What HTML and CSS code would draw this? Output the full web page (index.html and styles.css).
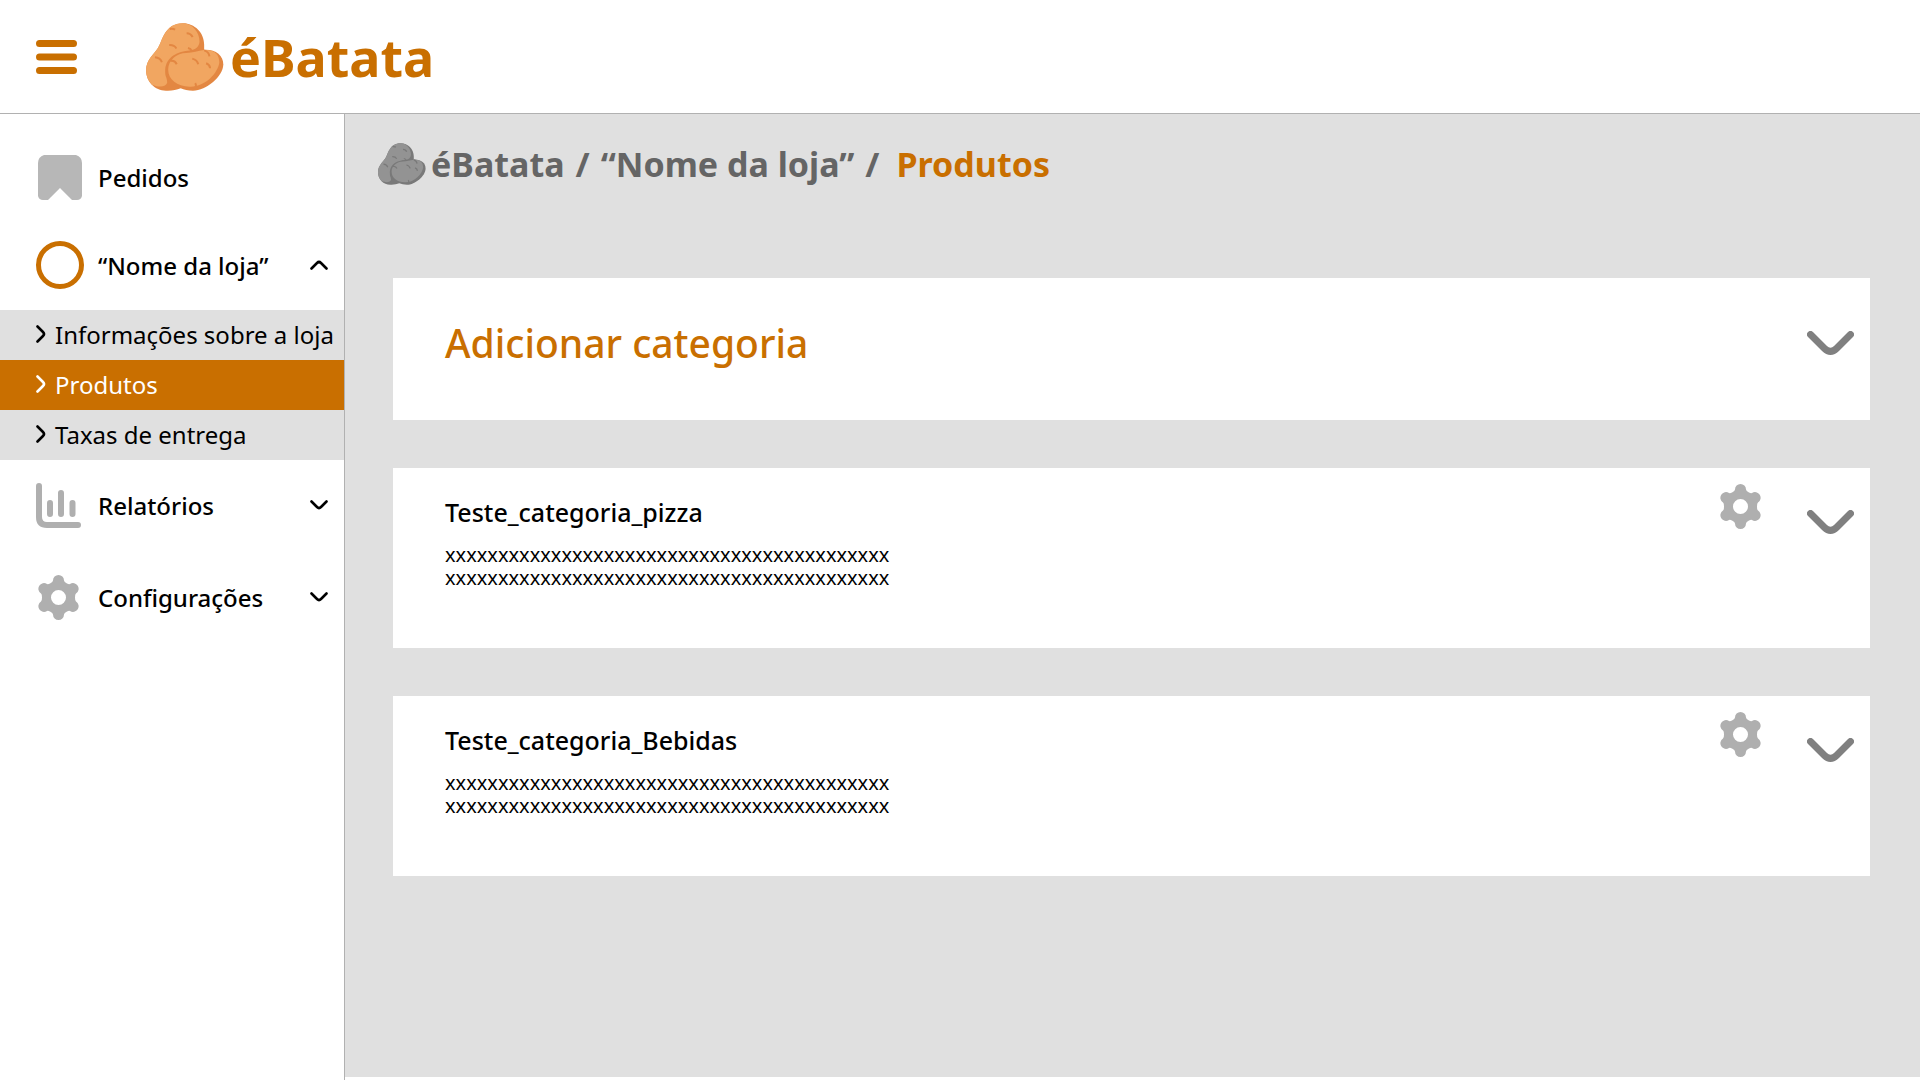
FILE: index.html
```html
<!DOCTYPE html>
<html lang="pt-BR">
<head>
<meta charset="utf-8">
<meta name="viewport" content="width=device-width, initial-scale=1">
<title>éBatata - Produtos</title>
<link rel="stylesheet" href="styles.css">
</head>
<body>
<svg class="sprite" aria-hidden="true">
  <symbol id="potato" viewBox="48 38 236 206">
    <path class="potato-shade" d="M160 39C195 39 224 68 224 103L224 125L153 236C140 241 125 244 108 243C75 243 48 215 48 181C48 150 72 132 85 112C98 92 104 39 160 39Z"/>
    <path class="potato-skin" d="M160 39C190 40 210 67 210 95C209 110 198 119 180 121C145 123 108 140 106 180C105 198 113 208 112 219C109 231 90 235 66 225C54 213 48 198 48 181C48 150 72 132 85 112C98 92 104 39 160 39Z"/>
    <path class="potato-shade" d="M224 119C258 117 282 136 282 163C282 200 230 243 190 243C175 243 163 240 153 236L108 200C103 160 140 125 190 121Z"/>
    <path class="potato-skin" d="M224 120C255 117 270 133 270 158C266 190 226 233 180 231C142 229 115 210 115 179C115 151 141 129 170 129C190 129 205 122 224 120Z"/>
    <path class="potato-mark" d="M120 56Q129 54 136 58M171 69Q184 69 189 81M118 105Q133 104 140 115M75 142Q91 143 96 157M175 114Q184 116 186 122M224 121Q238 125 240 139M122 153Q135 150 141 163M188 146Q203 150 206 163M230 160Q241 164 242 175M197 220Q201 226 198 233"/>
  </symbol>
  <symbol id="gear" viewBox="0 0 41 45">
    <path fill="currentColor" fill-rule="evenodd" d="M15 5.500a5.500 5.500 0 0 1 11 0Q26 7 29 8.500Q31 9.500 32 9a5.500 5.500 0 1 1 6 9.500Q37 19 37 22.500T38 26.500a5.500 5.500 0 1 1-6 9.500Q31 35.500 29 36.500Q26 38 26 39.500a5.500 5.500 0 0 1-11 0Q15 38 12 36.500Q10 35.500 9 36a5.500 5.500 0 1 1-6-9.500Q4 26 4 22.500T3 18.500a5.500 5.500 0 1 1 6-9.500Q10 9.500 12 8.500Q15 7 15 5.500ZM20.500 15a7.500 7.500 0 1 0 0 15a7.500 7.500 0 0 0 0-15Z"/>
  </symbol>
  <symbol id="chevron" viewBox="0 0 47 24">
    <path d="M3.500 3.500L17.500 17.500Q23.500 23.500 29.500 17.500L43.500 3.500" fill="none" stroke="currentColor" stroke-width="7" stroke-linecap="round"/>
  </symbol>
  <symbol id="chevron-thin" viewBox="0 0 18 10">
    <path d="M1.500 1.500L7 7Q9 9 11 7L16.500 1.500" fill="none" stroke="currentColor" stroke-width="2.600" stroke-linecap="round"/>
  </symbol>
  <symbol id="arrow" viewBox="0 0 10 18">
    <path d="M1.500 1.500L7 7Q9 9 7 11L1.500 16.500" fill="none" stroke="currentColor" stroke-width="2.600" stroke-linecap="round"/>
  </symbol>
</svg>

<header class="topbar">
  <button class="icon-button" type="button" aria-label="Menu">
    <svg class="burger" viewBox="0 0 41 34"><path d="M3.500 3.500H37.500M3.500 17H37.500M3.500 30.500H37.500" stroke="currentColor" stroke-width="7" stroke-linecap="round"/></svg>
  </button>
  <a class="brand" href="#">
    <svg class="brand-icon"><use href="#potato"/></svg>
    <span>éBatata</span>
  </a>
</header>

<div class="layout">
  <nav class="sidebar" aria-label="Principal">
    <a class="menu-row" href="#">
      <span class="menu-icon"><svg width="44" height="45" viewBox="0 0 44 45"><path fill="#b7b7b7" d="M6 0H38Q44 2 44 8V41Q43 45 39 45H34L22 33L10 45H5Q1 45 0 41V8Q0 2 6 0Z"/></svg></span>
      <span class="menu-label">Pedidos</span>
    </a>
    <button class="menu-row" type="button" aria-expanded="true">
      <span class="menu-icon"><span class="store-avatar"></span></span>
      <span class="menu-label">“Nome da loja”</span>
      <svg class="menu-chevron open"><use href="#chevron-thin"/></svg>
    </button>
    <div class="submenu">
      <a href="#"><svg class="submenu-arrow"><use href="#arrow"/></svg>Informações sobre a loja</a>
      <a href="#" class="active" aria-current="page"><svg class="submenu-arrow"><use href="#arrow"/></svg>Produtos</a>
      <a href="#"><svg class="submenu-arrow"><use href="#arrow"/></svg>Taxas de entrega</a>
    </div>
    <button class="menu-row collapsed" type="button" aria-expanded="false">
      <span class="menu-icon"><svg width="48" height="45" viewBox="0 0 48 45"><g fill="none" stroke="#afafaf" stroke-linecap="round"><path stroke-width="6" d="M3 3V34Q3 42 11 42H42"/><path stroke-width="6" d="M14 20V31M25 10V31M36.500 20V31"/></g></svg></span>
      <span class="menu-label">Relatórios</span>
      <svg class="menu-chevron"><use href="#chevron-thin"/></svg>
    </button>
    <button class="menu-row collapsed" type="button" aria-expanded="false">
      <span class="menu-icon"><svg class="gear" width="45" height="45" viewBox="0 0 45 45"><use href="#gear" width="41" height="45"/></svg></span>
      <span class="menu-label">Configurações</span>
      <svg class="menu-chevron"><use href="#chevron-thin"/></svg>
    </button>
  </nav>

  <main class="content">
    <h1 class="breadcrumb">
      <svg class="breadcrumb-icon"><use href="#potato"/></svg>
      <span>éBatata</span>
      <span>/</span>
      <span>“Nome da loja”</span>
      <span>/</span>
      <span class="current">Produtos</span>
    </h1>

    <section class="card add-card">
      <h2 class="add-title">Adicionar categoria</h2>
      <button class="icon-button" type="button" aria-label="Expandir"><svg class="chevron"><use href="#chevron"/></svg></button>
    </section>

    <section class="card category">
      <div class="category-text">
        <h3>Teste_categoria_pizza</h3>
        <p>xxxxxxxxxxxxxxxxxxxxxxxxxxxxxxxxxxxxxxxxxx<br>xxxxxxxxxxxxxxxxxxxxxxxxxxxxxxxxxxxxxxxxxx</p>
      </div>
      <button class="icon-button" type="button" aria-label="Configurar"><svg class="gear"><use href="#gear"/></svg></button>
      <button class="icon-button toggle" type="button" aria-label="Expandir"><svg class="chevron"><use href="#chevron"/></svg></button>
    </section>

    <section class="card category">
      <div class="category-text">
        <h3>Teste_categoria_Bebidas</h3>
        <p>xxxxxxxxxxxxxxxxxxxxxxxxxxxxxxxxxxxxxxxxxx<br>xxxxxxxxxxxxxxxxxxxxxxxxxxxxxxxxxxxxxxxxxx</p>
      </div>
      <button class="icon-button" type="button" aria-label="Configurar"><svg class="gear"><use href="#gear"/></svg></button>
      <button class="icon-button toggle" type="button" aria-label="Expandir"><svg class="chevron"><use href="#chevron"/></svg></button>
    </section>
  </main>
</div>
</body>
</html>
```
FILE: styles.css
```css
:root {
  --orange: #c96f00;
  --gray-bg: #e0e0e0;
  --line: #b1b1b1;
  --potato-skin: #f1a661;
  --potato-shade: #e38742;
}

* { box-sizing: border-box; }

body {
  margin: 0;
  min-height: 100vh;
  display: flex;
  flex-direction: column;
  background: #fff;
  color: #000;
  font-family: "Noto Sans", "Open Sans", sans-serif;
  font-size: 24px;
}

h1, h2, h3, p { margin: 0; }
a { color: inherit; text-decoration: none; }
button { font: inherit; color: inherit; background: none; border: 0; padding: 0; cursor: pointer; }
svg { display: block; flex: none; }

.sprite { position: absolute; width: 0; height: 0; }
.potato-skin { fill: var(--potato-skin); }
.potato-shade { fill: var(--potato-shade); }
.potato-mark { fill: none; stroke: var(--potato-shade); stroke-width: 6; }

.topbar {
  display: flex;
  align-items: center;
  gap: 69px;
  height: 114px;
  padding: 0 36px;
  border-bottom: 1px solid var(--line);
  color: var(--orange);
}
.burger { width: 41px; height: 34px; }
.brand {
  display: flex;
  align-items: center;
  gap: 6px;
  font-size: 52px;
  line-height: 72px;
  font-weight: 700;
}
.brand-icon { width: 78px; height: 68px; }

.layout { flex: 1; display: flex; }

.sidebar {
  flex: none;
  width: 345px;
  padding-top: 20px;
  border-right: 1px solid var(--line);
}
.menu-row {
  display: flex;
  align-items: center;
  gap: 14px;
  width: 100%;
  height: 88px;
  padding: 0 16px 2px 36px;
  font-weight: 500;
  text-align: left;
}
.menu-row.collapsed { height: 92px; }
.menu-icon { width: 48px; display: flex; justify-content: center; }
.menu-label { flex: 1; }
.store-avatar { width: 48px; height: 48px; border: 5px solid var(--orange); border-radius: 50%; }
.menu-chevron { width: 18px; height: 10px; overflow: visible; }
.menu-chevron.open { transform: rotate(180deg); }

.submenu { background: var(--gray-bg); }
.submenu a {
  display: flex;
  align-items: center;
  gap: 9px;
  height: 50px;
  padding: 0 0 2px 36px;
  white-space: nowrap;
}
.submenu .active { background: var(--orange); color: #fff; }
.submenu-arrow { width: 10px; height: 18px; overflow: visible; }

.gear { width: 41px; height: 45px; color: #afafaf; }
.menu-icon .gear { width: 45px; }

.content {
  flex: 1;
  min-width: 0;
  display: flex;
  flex-direction: column;
  gap: 48px;
  margin-bottom: 3px;
  padding: 24px 50px 48px 48px;
  background: var(--gray-bg);
}
.breadcrumb {
  display: flex;
  align-items: center;
  gap: 11px;
  margin: 0 0 40px -15px;
  font-size: 34px;
  line-height: 52px;
  color: #656565;
}
.breadcrumb-icon {
  --potato-skin: #939393;
  --potato-shade: #797979;
  width: 48px;
  height: 42px;
  margin-right: -6px;
}
.breadcrumb .current { margin-left: 6px; color: var(--orange); }

.card {
  display: flex;
  gap: 46px;
  padding: 16px 16px 16px 52px;
  background: #fff;
}
.icon-button { flex: none; align-self: flex-start; }
.topbar .icon-button { align-self: center; }
.chevron { width: 47px; height: 24px; color: #808080; }

.add-card { min-height: 142px; align-items: center; padding-bottom: 28px; }
.add-card .icon-button { align-self: center; }
.add-title { flex: 1; font-size: 39px; line-height: 48px; font-weight: 500; color: var(--orange); }

.category { min-height: 180px; }
.category .toggle { padding-top: 26px; }
.category-text { flex: 1; padding-top: 12px; }
.category h3 { font-size: 25px; line-height: 32px; font-weight: 500; }
.category p { margin-top: 15px; font-size: 20px; line-height: 23px; }
```
